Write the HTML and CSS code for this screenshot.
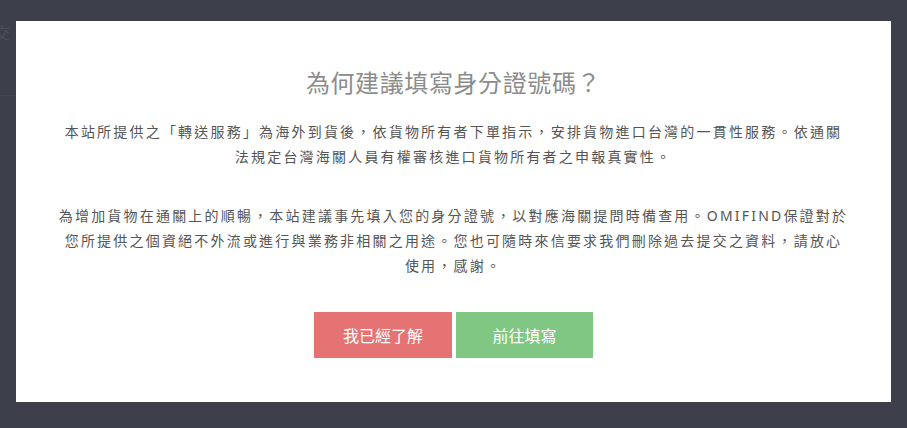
FILE: index.html
```html
<!DOCTYPE html>
<html lang="zh-Hant">
<head>
<meta charset="utf-8">
<title>為何建議填寫身分證號碼？</title>
<link rel="stylesheet" href="styles.css">
</head>
<body>
<div class="backdrop-text">交</div>
<div class="backdrop-line"></div>
<div class="modal">
  <h1 class="modal-title">為何建議填寫身分證號碼？</h1>
  <p class="modal-text">本站所提供之「轉送服務」為海外到貨後，依貨物所有者下單指示，安排貨物進口台灣的一貫性服務。依通關法規定台灣海關人員有權審核進口貨物所有者之申報真實性。</p>
  <p class="modal-text second">為增加貨物在通關上的順暢，本站建議事先填入您的身分證號，以對應海關提問時備查用。OMIFIND保證對於您所提供之個資絕不外流或進行與業務非相關之用途。您也可隨時來信要求我們刪除過去提交之資料，請放心使用，感謝。</p>
  <div class="modal-actions">
    <button class="btn btn-red" type="button">我已經了解</button>
    <button class="btn btn-green" type="button">前往填寫</button>
  </div>
</div>
</body>
</html>
```
FILE: styles.css
```css
html, body {
  margin: 0;
  padding: 0;
}
body {
  background: #3d3f4b;
  padding: 21px 16px 26px;
  font-family: "Noto Sans", "Noto Sans CJK TC", sans-serif;
  position: relative;
  min-height: 428px;
  box-sizing: border-box;
  overflow: hidden;
}
.backdrop-text {
  position: absolute;
  left: -6px;
  top: 24px;
  font-size: 16px;
  line-height: 18px;
  color: #4b4d59;
}
.backdrop-line {
  position: absolute;
  left: 0;
  top: 95px;
  width: 16px;
  height: 1px;
  background: #44464f;
}
.modal {
  width: 875px;
  height: 381px;
  box-sizing: border-box;
  background: #ffffff;
  padding: 45px 40px 0;
  display: flex;
  flex-direction: column;
  align-items: center;
}
.modal-title {
  margin: 0;
  font-size: 24px;
  line-height: 34px;
  font-weight: 400;
  color: #8c8c8c;
  letter-spacing: 0.6px;
  text-align: center;
}
.modal-text {
  margin: 19px 0 0;
  width: 791px;
  font-size: 14px;
  line-height: 25px;
  letter-spacing: 2.2px;
  color: #555555;
  text-align: center;
}
.modal-text.second {
  margin-top: 34px;
}
.modal-actions {
  margin-top: 34px;
  display: flex;
  gap: 4px;
}
.btn {
  border: none;
  height: 46px;
  width: 138px;
  font-family: "Noto Sans CJK TC", sans-serif;
  font-size: 16px;
  color: #ffffff;
  padding: 0;
  cursor: pointer;
}
.btn-red {
  background: #e57373;
}
.btn-green {
  background: #81c784;
  width: 137px;
}
```
